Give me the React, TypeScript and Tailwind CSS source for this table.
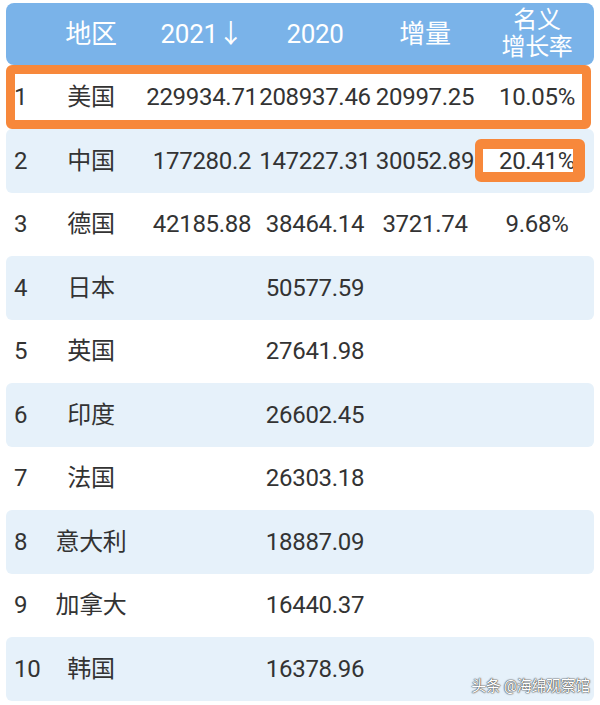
import React from "react";

type Row = {
  rank: string;
  name: string;
  y2021?: string;
  y2020: string;
  inc?: string;
  rate?: string;
};

const rows: Row[] = [
  { rank: "1", name: "美国", y2021: "229934.71", y2020: "208937.46", inc: "20997.25", rate: "10.05%" },
  { rank: "2", name: "中国", y2021: "177280.2", y2020: "147227.31", inc: "30052.89", rate: "20.41%" },
  { rank: "3", name: "德国", y2021: "42185.88", y2020: "38464.14", inc: "3721.74", rate: "9.68%" },
  { rank: "4", name: "日本", y2020: "50577.59" },
  { rank: "5", name: "英国", y2020: "27641.98" },
  { rank: "6", name: "印度", y2020: "26602.45" },
  { rank: "7", name: "法国", y2020: "26303.18" },
  { rank: "8", name: "意大利", y2020: "18887.09" },
  { rank: "9", name: "加拿大", y2020: "16440.37" },
  { rank: "10", name: "韩国", y2020: "16378.96" },
];

const font = "font-['Roboto','Noto_Sans_CJK_SC',sans-serif]";

function Cell({ w, children }: { w: string; children?: React.ReactNode }) {
  return <div className={`flex shrink-0 items-center justify-center whitespace-nowrap ${w}`}>{children}</div>;
}

function RowCells({ row }: { row: Row }) {
  return (
    <>
      <div className="w-[53px] shrink-0 pl-[8px]">{row.rank}</div>
      <Cell w="w-[64px]">{row.name}</Cell>
      <Cell w="w-[158px]">{row.y2021}</Cell>
      <Cell w="w-[68px]">{row.y2020}</Cell>
      <Cell w="w-[152px]">{row.inc}</Cell>
      <Cell w="w-[72px]">
        {row.rank === "2" ? (
          <span className="mr-[14px] flex h-[43px] w-[110px] shrink-0 items-center justify-end overflow-hidden rounded-md border-[8px] border-y-[10px] border-r-[12px] border-[#f7883b] bg-white">
            <span className="-mr-[2px]">{row.rate}</span>
          </span>
        ) : (
          row.rate
        )}
      </Cell>
    </>
  );
}

export default function App() {
  return (
    <div className={`relative h-[705px] w-[600px] overflow-hidden bg-white px-[6px] pt-[3px] text-[24px] tracking-[-0.3px] text-[#333] ${font}`}>
      <div className="flex h-[62px] items-center rounded-lg bg-[#7ab3e9] text-[26px] text-white">
        <div className="w-[53px] shrink-0" />
        <Cell w="w-[64px]">地区</Cell>
        <Cell w="w-[158px]">2021↓</Cell>
        <Cell w="w-[68px]">2020</Cell>
        <Cell w="w-[152px]">增量</Cell>
        <Cell w="w-[72px]">
          <span className="flex flex-col items-center text-[24px] leading-[27px]">
            <span>名义</span>
            <span>增长率</span>
          </span>
        </Cell>
      </div>

      {rows.map((row, i) => {
        if (i === 0) {
          return (
            <div key={row.rank} className="mr-[3px] flex h-[64px] items-center rounded-md border-[9px] border-[#f7883b] bg-white">
              <div className="-mx-[9px] flex items-center">
                <RowCells row={row} />
              </div>
            </div>
          );
        }
        return (
          <div
            key={row.rank}
            className={`flex h-[63.5px] items-center rounded-md ${i % 2 === 1 ? "bg-[#e6f1fa]" : "bg-white"}`}
          >
            <RowCells row={row} />
          </div>
        );
      })}

      <div className="absolute bottom-[8px] right-[10px] text-[15px] tracking-tight text-white [text-shadow:0_0_1px_#444,0_0_1px_#444,0_0_2px_#666]">
        头条 @海绵观察馆
      </div>
    </div>
  );
}
